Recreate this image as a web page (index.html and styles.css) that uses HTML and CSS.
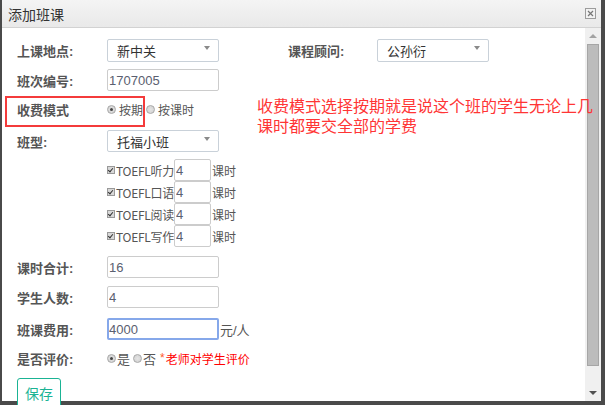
FILE: index.html
```html
<!DOCTYPE html>
<html lang="zh">
<head>
<meta charset="utf-8">
<title>添加班课</title>
<link rel="stylesheet" href="styles.css">
</head>
<body>
<div class="dialog">
  <div class="titlebar">
    <span class="title">添加班课</span>
    <span class="close"><svg width="11" height="11" viewBox="0 0 11 11"><rect x="0.5" y="0.5" width="10" height="10" fill="#f2f2f2" stroke="#9c9c9c"/><path d="M3 3L8 8M8 3L3 8" stroke="#777" stroke-width="1.2"/></svg></span>
  </div>
  <div class="body">
    <div class="content">
      <div class="row r1">
        <span class="lbl">上课地点:</span>
        <div class="select">新中关<span class="caret"></span></div>
        <span class="lbl lbl2">课程顾问:</span>
        <div class="select">公孙衍<span class="caret"></span></div>
      </div>
      <div class="row r2">
        <span class="lbl">班次编号:</span>
        <input class="input" value="1707005" readonly>
      </div>
      <div class="row r3">
        <span class="mark"></span>
        <span class="lbl">收费模式</span>
        <span class="radio on"></span><span class="opt">按期</span>
        <span class="radio"></span><span class="opt">按课时</span>
        <p class="note">收费模式选择按期就是说这个班的学生无论上几课时都要交全部的学费</p>
      </div>
      <div class="row r4">
        <span class="lbl">班型:</span>
        <div class="select">托福小班<span class="caret"></span></div>
      </div>
      <div class="checks">
        <div class="chk"><span class="box"></span><span class="ctext">TOEFL听力</span><input class="small" value="4" readonly><span class="unit">课时</span></div>
        <div class="chk"><span class="box"></span><span class="ctext">TOEFL口语</span><input class="small" value="4" readonly><span class="unit">课时</span></div>
        <div class="chk"><span class="box"></span><span class="ctext">TOEFL阅读</span><input class="small" value="4" readonly><span class="unit">课时</span></div>
        <div class="chk"><span class="box"></span><span class="ctext">TOEFL写作</span><input class="small" value="4" readonly><span class="unit">课时</span></div>
      </div>
      <div class="row r6">
        <span class="lbl">课时合计:</span>
        <input class="input" value="16" readonly>
      </div>
      <div class="row r7">
        <span class="lbl">学生人数:</span>
        <input class="input" value="4" readonly>
      </div>
      <div class="row r8">
        <span class="lbl">班课费用:</span>
        <input class="input focus" value="4000" readonly>
        <span class="suffix">元/人</span>
      </div>
      <div class="row r9">
        <span class="lbl">是否评价:</span>
        <span class="radio on"></span><span class="opt2">是</span>
        <span class="radio"></span><span class="opt2">否</span>
        <span class="star">*</span><span class="warn">老师对学生评价</span>
      </div>
      <button class="save">保存</button>
    </div>
    <div class="scrollbar">
      <span class="sb-btn"><span class="up"></span></span>
      <span class="thumb"></span>
      <span class="sb-btn sb-down"><span class="down"></span></span>
    </div>
  </div>
</div>
</body>
</html>
```

FILE: styles.css
```css
* { box-sizing: border-box; }
html, body { margin: 0; padding: 0; }
body {
  width: 605px;
  height: 405px;
  overflow: hidden;
  background: #4a4a4a;
  font-family: "Liberation Sans", "Noto Sans CJK SC", sans-serif;
  color: #555;
}
.dialog {
  margin-left: 2px;
  width: 599px;
  height: 401px;
  background: #fff;
  display: flex;
  flex-direction: column;
}
.titlebar {
  flex: none;
  height: 28px;
  background: linear-gradient(#f4f4f4, #e9e9e9);
  border-bottom: 1px solid #d2d2d2;
  display: flex;
  align-items: center;
  justify-content: space-between;
  padding: 0 5px 0 6px;
}
.title { font-size: 14px; color: #333; }
.close { display: flex; width: 11px; height: 11px; }
.body { flex: 1; display: flex; min-height: 0; }
.content {
  flex: 1;
  padding: 11px 0 0 15px;
}
.row { display: flex; align-items: center; position: relative; height: 22px; }
.lbl { flex: none; width: 90px; font-size: 13px; font-weight: bold; color: #555; }
.lbl2 { margin-left: 69px; width: 89px; }
.select {
  flex: none;
  width: 112px;
  height: 22px;
  border: 1px solid #c9d1d9;
  border-radius: 2px;
  font-size: 13px;
  color: #333;
  padding: 0 8px 0 9px;
  display: flex;
  align-items: center;
  justify-content: space-between;
}
.r1 .select { height: 23px; }
.caret {
  align-self: flex-start;
  margin-top: 6px;
  width: 0;
  height: 0;
  border-left: 3px solid transparent;
  border-right: 3px solid transparent;
  border-top: 4px solid #8a8a8a;
}
.input {
  flex: none;
  width: 112px;
  height: 22px;
  border: 1px solid #ccc;
  border-radius: 2px;
  font-family: "Liberation Sans", "Noto Sans CJK SC", sans-serif;
  font-size: 13px;
  color: #5a6070;
  padding: 0 0 0 1px;
  outline: none;
  margin: 0;
}
.input.focus { border: 2px solid #86a8ea; padding-left: 0; }
.r1 { height: 23px; }
.r2 { margin-top: 7px; }
.r3 { margin-top: 7px; }
.r4 { margin-top: 10px; }
.r6 { margin-top: 9px; }
.r7 { margin-top: 8px; }
.r8 { margin-top: 10px; }
.r9 { margin-top: 8px; height: 20px; }
.mark {
  position: absolute;
  left: -12px;
  top: -2px;
  width: 140px;
  height: 31px;
  border: 2px solid #f43b3b;
}
.note {
  position: absolute;
  left: 240px;
  top: -3px;
  width: 345px;
  margin: 0;
  font-family: "Noto Sans CJK SC", sans-serif;
  font-size: 16px;
  line-height: 20px;
  color: #ff3535;
}
.radio {
  flex: none;
  width: 9px;
  height: 9px;
  border-radius: 50%;
  border: 1px solid #a8a8a8;
  background: radial-gradient(circle, #e4e4e4 0, #cfcfcf 100%);
  position: relative;
}
.radio.on::after {
  content: "";
  position: absolute;
  left: 2px;
  top: 2px;
  width: 3px;
  height: 3px;
  border-radius: 50%;
  background: #444;
}
.opt { font-size: 12px; color: #555; margin: 0 3px 0 3px; }
.opt2 { font-size: 13px; color: #555; margin: 0 3px 0 1px; }
.star { color: #ff5a2a; font-size: 12px; margin-left: 1px; }
.warn { color: #f00; font-size: 12px; margin-left: 1px; }
.suffix { font-size: 13px; color: #555; margin-left: 1px; }
.checks { margin: 7px 0 0 90px; display: flex; flex-direction: column; }
.chk { display: flex; align-items: center; height: 22px; }
.box {
  flex: none;
  width: 8px;
  height: 8px;
  border: 1px solid #999;
  background: #d8d8d8;
  position: relative;
}
.box::after {
  content: "";
  position: absolute;
  left: 1px;
  top: 0;
  width: 2px;
  height: 4px;
  border-right: 1.5px solid #333;
  border-bottom: 1.5px solid #333;
  transform: rotate(40deg);
}
.ctext {
  font-family: "Noto Sans CJK SC", sans-serif;
  font-size: 12px;
  letter-spacing: -0.3px;
  color: #555;
  margin-left: 1px;
  white-space: nowrap;
}
.small {
  flex: none;
  width: 37px;
  height: 22px;
  border: 1px solid #ccc;
  border-radius: 2px;
  font-family: "Liberation Sans", "Noto Sans CJK SC", sans-serif;
  font-size: 13px;
  color: #5a6070;
  padding: 0 0 0 1px;
  margin: 0;
  outline: none;
}
.unit { font-size: 12px; color: #555; margin-left: 1px; }
.save {
  display: block;
  margin: 10px 0 0 0;
  width: 44px;
  height: 30px;
  border: 1px solid #1ab394;
  border-radius: 3px;
  background: #fff;
  color: #1ab394;
  font-family: "Noto Sans CJK SC", sans-serif;
  font-size: 14px;
  padding: 0;
}
.scrollbar {
  flex: none;
  width: 16px;
  background: #f0f0f0;
  display: flex;
  flex-direction: column;
  align-items: center;
}
.sb-btn { flex: none; height: 16px; width: 16px; display: flex; align-items: center; justify-content: center; }
.sb-down { margin-top: auto; }
.up {
  width: 0; height: 0;
  border-left: 4px solid transparent;
  border-right: 4px solid transparent;
  border-bottom: 4px solid #a3a3a3;
}
.down {
  width: 0; height: 0;
  border-left: 4px solid transparent;
  border-right: 4px solid transparent;
  border-top: 4px solid #505050;
}
.thumb {
  flex: none;
  width: 12px;
  height: 322px;
  background: #bcbcbc;
  border: 1px solid #a6a6a6;
}
```
